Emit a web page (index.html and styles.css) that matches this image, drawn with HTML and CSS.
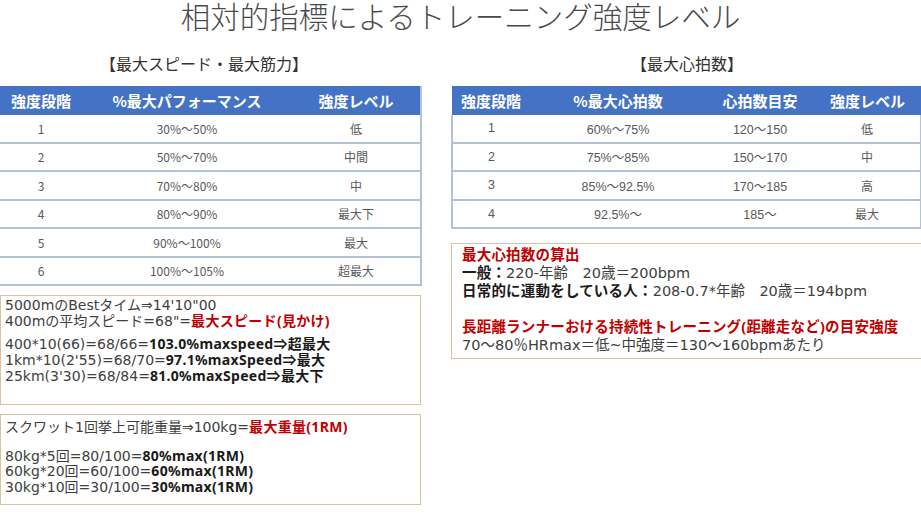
FILE: index.html
```html
<!DOCTYPE html>
<html lang="ja">
<head>
<meta charset="utf-8">
<title>相対的指標によるトレーニング強度レベル</title>
<link rel="stylesheet" href="styles.css">
</head>
<body>
<h1 class="title">相対的指標によるトレーニング強度レベル</h1>
<div class="columns">
  <section class="col col-left">
    <h2 class="subtitle subtitle-left">【最大スピード・最大筋力】</h2>
    <table class="grid grid-left">
      <colgroup><col class="l1"><col class="l2"><col class="l3"></colgroup>
      <thead>
        <tr><th>強度段階</th><th>%最大パフォーマンス</th><th>強度レベル</th></tr>
      </thead>
      <tbody>
        <tr><td>1</td><td>30%～50%</td><td>低</td></tr>
        <tr><td>2</td><td>50%～70%</td><td>中間</td></tr>
        <tr><td>3</td><td>70%～80%</td><td>中</td></tr>
        <tr><td>4</td><td>80%～90%</td><td>最大下</td></tr>
        <tr><td>5</td><td>90%～100%</td><td>最大</td></tr>
        <tr><td>6</td><td>100%～105%</td><td>超最大</td></tr>
      </tbody>
    </table>
    <div class="box box1">
      <p>5000mのBestタイム⇒14'10"00<br>400mの平均スピード=68"=<b class="red">最大スピード(見かけ)</b></p>
      <p>400*10(66)=68/66=<b>103.0%maxspeed⇒超最大</b><br>1km*10(2'55)=68/70=<b>97.1%maxSpeed⇒最大</b><br>25km(3'30)=68/84=<b>81.0%maxSpeed⇒最大下</b></p>
    </div>
    <div class="box box2">
      <p>スクワット1回挙上可能重量⇒100kg=<b class="red">最大重量(1RM)</b></p>
      <p>80kg*5回=80/100=<b>80%max(1RM)</b><br>60kg*20回=60/100=<b>60%max(1RM)</b><br>30kg*10回=30/100=<b>30%max(1RM)</b></p>
    </div>
  </section>
  <section class="col col-right">
    <h2 class="subtitle">【最大心拍数】</h2>
    <table class="grid grid-right">
      <colgroup><col class="r1"><col class="r2"><col class="r3"><col class="r4"></colgroup>
      <thead>
        <tr><th>強度段階</th><th>%最大心拍数</th><th>心拍数目安</th><th>強度レベル</th></tr>
      </thead>
      <tbody>
        <tr><td>1</td><td>60%～75%</td><td>120～150</td><td>低</td></tr>
        <tr><td>2</td><td>75%～85%</td><td>150～170</td><td>中</td></tr>
        <tr><td>3</td><td>85%～92.5%</td><td>170～185</td><td>高</td></tr>
        <tr><td>4</td><td>92.5%～</td><td>185～</td><td>最大</td></tr>
      </tbody>
    </table>
    <div class="box box3">
      <p><b class="red">最大心拍数の算出</b><br><b>一般：</b>220-年齢　20歳＝200bpm<br><b>日常的に運動をしている人：</b>208-0.7*年齢　20歳＝194bpm</p>
      <p><b class="red">長距離ランナーおける持続性トレーニング(距離走など)の目安強度</b><br>70～80％HRmax＝低~中強度＝130～160bpmあたり</p>
    </div>
  </section>
</div>
</body>
</html>
```

FILE: styles.css
```css
html, body {
  margin: 0;
  padding: 0;
}
body {
  width: 921px;
  height: 518px;
  overflow: hidden;
  background: #ffffff;
  font-family: "Noto Sans CJK JP", "Noto Sans", sans-serif;
  color: #404040;
}
.title {
  margin: 0;
  height: 40px;
  line-height: 30px;
  font-size: 29.5px;
  font-weight: 300;
  color: #4a4a4a;
  text-align: center;
}
.columns {
  display: grid;
  grid-template-columns: 421px 472px;
  column-gap: 30px;
}
.col {
  display: flex;
  flex-direction: column;
}
.subtitle {
  margin: 0;
  height: 46px;
  line-height: 46px;
  font-size: 16px;
  font-weight: 400;
  color: #333333;
  text-align: center;
}
.subtitle-left {
  padding-right: 13px;
}
.grid {
  border-collapse: collapse;
  table-layout: fixed;
}
.grid-left { width: 421px; }
.grid-right { width: 469px; }
.l1 { width: 82px; }
.l2 { width: 210px; }
.l3 { width: 129px; }
.r1 { width: 78px; }
.r2 { width: 176px; }
.r3 { width: 108px; }
.r4 { width: 107px; }
.grid th {
  background: #4472c4;
  color: #ffffff;
  font-size: 15px;
  font-weight: 700;
  height: 29px;
  padding: 0;
  text-align: center;
}
.grid td {
  height: 26.5px;
  padding: 0;
  text-align: center;
  font-size: 12px;
  color: #595959;
  border-bottom: 2px solid #b3c2d6;
  background: #ffffff;
}
.grid-left td:last-child,
.grid-left th:last-child {
  border-right: 2px solid #b3c2d6;
}
.grid-right td:first-child {
  border-left: 2px solid #b3c2d6;
}
.grid-right td:last-child {
  border-right: 2px solid #b3c2d6;
}
.grid-right td {
  font-family: "Liberation Sans", "Noto Sans CJK JP", sans-serif;
  font-size: 12.5px;
}
.grid-right td:last-child {
  font-family: "Noto Sans CJK JP", sans-serif;
  font-size: 12px;
}
.box {
  border: 1.5px solid #d9c2a3;
  box-sizing: border-box;
  font-family: "DejaVu Sans", "Noto Sans CJK JP", sans-serif;
  font-size: 14px;
  color: #404040;
}
.box p {
  margin: 0;
}
.box b {
  font-family: "Noto Sans", "Noto Sans CJK JP", sans-serif;
  color: #1a1a1a;
  font-weight: 700;
  letter-spacing: 0.3px;
  line-height: 1;
}
.box b.red {
  color: #c00000;
}
.box1 {
  margin-top: 9px;
  height: 110px;
  padding: 1px 4px 0;
  line-height: 16px;
}
.box1 p + p {
  margin-top: 7px;
}
.box2 {
  margin-top: 9px;
  height: 91px;
  padding: 5px 4px 0;
  line-height: 15.5px;
}
.box2 p + p {
  margin-top: 13px;
}
.box3 {
  margin-top: 14px;
  width: 472px;
  height: 116px;
  padding: 2px 10px 0;
  font-size: 14.5px;
  line-height: 18px;
}
.box3 b {
  letter-spacing: 0.2px;
}
.box3 p + p {
  margin-top: 18px;
}
```
